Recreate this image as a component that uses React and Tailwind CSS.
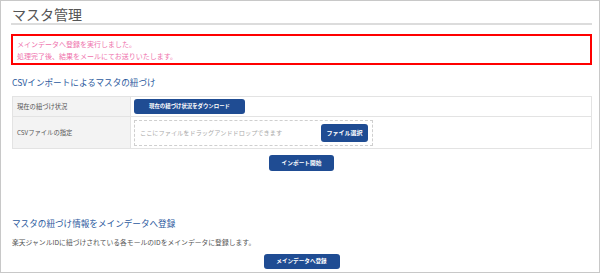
import React from "react";

const font = { fontFamily: '"Noto Sans CJK JP", "Noto Sans", sans-serif' };

function Btn({ children, className = "" }) {
  return (
    <div
      className={`flex items-center justify-center rounded-[3px] bg-[#1f4c93] text-white font-bold ${className}`}
    >
      {children}
    </div>
  );
}

export default function App() {
  return (
    <div
      className="w-[600px] h-[273px] border border-[#c8c8c8] bg-white pl-[10px] pr-[7px] pt-[5px] overflow-hidden"
      style={font}
    >
      <div className="h-[19px] border-b-2 border-[#dcdcdc] pl-px text-[14px] leading-[17px] text-[#555]">
        マスタ管理
      </div>

      <div className="mt-[9px] h-[31px] border-2 border-[#ff0000] pl-[4px] pt-[2px] text-[7px] leading-[12px] text-[#ef73ad]">
        <div>メインデータへ登録を実行しました。</div>
        <div>処理完了後、結果をメールにてお送りいたします。</div>
      </div>

      <div className="mt-[11px] h-[12px] pl-px text-[8.6px] leading-[12px] text-[#2c5a9e]">
        CSVインポートによるマスタの紐づけ
      </div>

      <div className="mt-[8px] ml-px border border-[#e3e3e3] text-[6.3px] text-[#555]">
        <div className="flex h-[20px] border-b border-[#e3e3e3]">
          <div className="w-[118px] shrink-0 bg-[#f3f3f3] border-r border-[#e3e3e3] pl-[4px] flex items-center">
            現在の紐づけ状況
          </div>
          <div className="flex items-center pl-[3px]">
            <Btn className="w-[111px] h-[15px] text-[5.4px]">現在の紐づけ状況をダウンロード</Btn>
          </div>
        </div>
        <div className="flex h-[31px]">
          <div className="w-[118px] shrink-0 bg-[#f3f3f3] border-r border-[#e3e3e3] pl-[4px] flex items-center">
            CSVファイルの指定
          </div>
          <div className="flex items-center pl-[3px]">
            <div className="w-[239px] h-[26px] border border-dashed border-[#cfcfcf] flex items-center justify-between pl-[5px] pr-[4px]">
              <span className="text-[6.2px] text-[#aaa]">ここにファイルをドラッグアンドドロップできます</span>
              <Btn className="w-[47px] h-[18px] text-[6px]">ファイル選択</Btn>
            </div>
          </div>
        </div>
      </div>

      <div className="mt-[6px] flex justify-center">
        <Btn className="w-[65px] h-[16px] text-[5.7px]">インポート開始</Btn>
      </div>

      <div className="mt-[46px] h-[12px] pl-px text-[8.6px] leading-[12px] text-[#2c5a9e]">
        マスタの紐づけ情報をメインデータへ登録
      </div>

      <div className="mt-[7px] h-[12px] pl-px text-[6.8px] leading-[12px] text-[#555]">
        楽天ジャンルIDに紐づけされている各モールのIDをメインデータに登録します。
      </div>

      <div className="mt-[6px] flex justify-center">
        <Btn className="w-[76px] h-[15px] text-[5.6px]">メインデータへ登録</Btn>
      </div>
    </div>
  );
}
